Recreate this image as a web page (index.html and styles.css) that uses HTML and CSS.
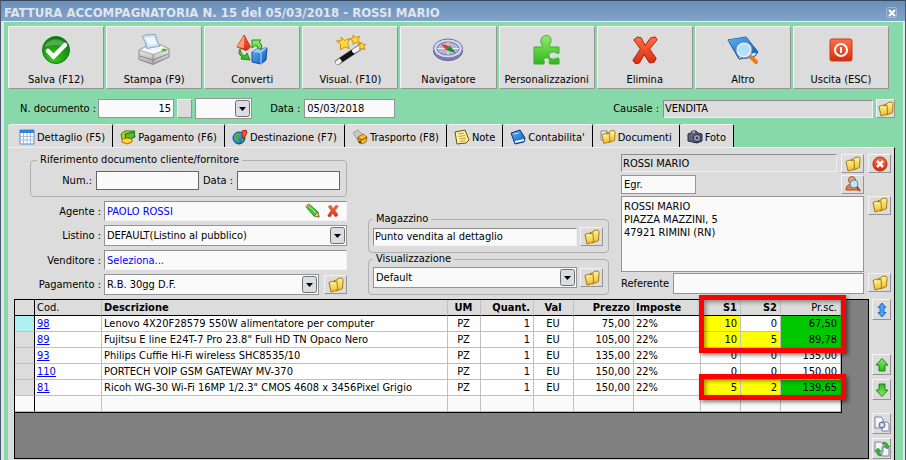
FILE: index.html
```html
<!DOCTYPE html>
<html lang="it">
<head>
    <meta charset="UTF-8">
    <meta name="viewport" content="width=device-width, initial-scale=1.0">
    <title>Fattura accompagnatoria</title>
    <link rel="stylesheet" href="styles.css">
</head>
<body>
    <svg class="defs" width="0" height="0" aria-hidden="true">
        <defs>
            <linearGradient id="gGold" x1="0" y1="0" x2="0" y2="1"><stop offset="0" stop-color="#fff6a0"/><stop offset="1" stop-color="#eebc20"/></linearGradient>
            <linearGradient id="gGreen" x1="0" y1="0" x2="0" y2="1"><stop offset="0" stop-color="#8fec6a"/><stop offset="1" stop-color="#2fb81e"/></linearGradient>
            <linearGradient id="gRed" x1="0" y1="0" x2="0" y2="1"><stop offset="0" stop-color="#ff7048"/><stop offset="1" stop-color="#d82c0c"/></linearGradient>
            <linearGradient id="gBlue" x1="0" y1="0" x2="1" y2="1"><stop offset="0" stop-color="#5ab4f4"/><stop offset="1" stop-color="#1058b8"/></linearGradient>
            <linearGradient id="gGrey" x1="0" y1="0" x2="0" y2="1"><stop offset="0" stop-color="#ffffff"/><stop offset="1" stop-color="#a8a8a8"/></linearGradient>
            <radialGradient id="gOk" cx=".4" cy=".8" r=".8"><stop offset="0" stop-color="#3cc81c"/><stop offset="1" stop-color="#0a7a10"/></radialGradient>
        </defs>
        <symbol id="folder" viewBox="0 0 16 16">
            <path d="M6 3.500l3-.5 1-1.500 4-.5 1 1.500-.5 9-6 2.500z" fill="url(#gGold)" stroke="#a87c10"/>
            <path d="M1 5.500l3.500-1.500 1 1 3.500-1L9.500 13l-6.500 2z" fill="url(#gGold)" stroke="#a87c10"/>
        </symbol>
        <symbol id="cross" viewBox="0 0 28 30">
            <path d="M2 4L6 1l4 1 4 8 6-8 5-1 2 3-8 10 7 10-2 4-5 1-6-9-5 9-4 1-3-4 8-12z" fill="url(#gRed)" stroke="#a81c08"/>
        </symbol>
        <symbol id="arrow-up" viewBox="0 0 16 16">
            <path d="M8 1.500l6 6.500h-3v6H5V8H2z" fill="url(#gGreen)" stroke="#188818"/>
        </symbol>
    </svg>

    <div class="window">
        <header class="titlebar">
            <h1>FATTURA ACCOMPAGNATORIA N. 15 del 05/03/2018 - ROSSI MARIO</h1>
            <button type="button" class="close" aria-label="Chiudi">
                <svg width="8" height="8" viewBox="0 0 8 8"><path d="M1 1l6 6M7 1L1 7" stroke="#fff" stroke-width="2"/></svg>
            </button>
        </header>

        <nav class="toolbar">
            <button type="button">
                <svg viewBox="0 0 32 32"><circle cx="16" cy="16" r="13.500" fill="url(#gOk)" stroke="#0c7c14"/><path d="M4.500 13a12 11 0 0 1 23 0q-12-4-23 0z" fill="#fff" opacity=".25"/><path d="M8 17l5.500 5.500L25 11" fill="none" stroke="#fff" stroke-width="4.500" stroke-linecap="round"/></svg>
                <span>Salva (F12)</span>
            </button>
            <button type="button">
                <svg viewBox="0 0 32 32"><path d="M1 16l8-4 14-1 8 4v8l-16 7.500-14-5z" fill="url(#gGrey)" stroke="#888"/><path d="M1 16l14 4.500 16-5.500-8-4-14 1z" fill="#f4f4f4" stroke="#a8a8a8"/><path d="M4 2.500l3.500-1.500 10-.5q.5 6 4.500 11.500L9 14.500q-1-7-5-12z" fill="#cfe4fa" stroke="#88a0c0"/><path d="M7 4l9-1 3 7-8 1z" fill="#f0f8ff"/><path d="M15 20.500v9M2 22l13 4 15-6" stroke="#888" fill="none"/><ellipse cx="26" cy="16" rx="2.500" ry="1.500" fill="#38c820"/></svg>
                <span>Stampa (F9)</span>
            </button>
            <button type="button">
                <svg viewBox="0 0 32 32"><path d="M8 1l6.500 12-4 3.500L1 13z" fill="url(#gRed)" stroke="#c03010"/><path d="M8 1v13L1 13z" fill="#ff9a78"/><path d="M16 18l5-3 10-1-1 12-5 4-9-2z" fill="url(#gBlue)" stroke="#20489c"/><path d="M16 18l9 1 6-5-10 1z" fill="#9ccafa"/><path d="M25 19v11" stroke="#b0d4ff"/><path d="M4 15q1 6 5 7l2-3 3 7-9-1 1-2q-5-4-2-8zM16 6h9l-2 2q4 2 2 8l-4-3q0-2-1-2l-4 3z" fill="url(#gGreen)" stroke="#189018"/></svg>
                <span>Converti</span>
            </button>
            <button type="button">
                <svg viewBox="0 0 32 32"><path d="M4 28L25 14" stroke="#777" stroke-width="6" stroke-linecap="round"/><path d="M7 26l12-8" stroke="#111" stroke-width="5"/><path d="M3.500 28.500l2-1.500M20 17l5-3" stroke="#f4f4f4" stroke-width="4" stroke-linecap="round"/><path d="M7 3l3.500 3.500 5-2-2 5 2 5-5-1.500-4 3V10L2.500 7l5-.5zM19 1l2.500 2.500 4-1-1.500 3.500 2 3.500-4-1-3 2V7l-3-2 3-1zM27 8l1.500 2.500 3-.5-1.500 2.500 1 3-3-1-2.500 1 .5-3-2-2 3-.5z" fill="#ffd83c" stroke="#c8900c"/></svg>
                <span>Visual. (F10)</span>
            </button>
            <button type="button">
                <svg viewBox="0 0 32 32"><ellipse cx="16" cy="17" rx="14.500" ry="9.500" fill="#8484b8" stroke="#5c5c94"/><ellipse cx="16" cy="14.500" rx="14.500" ry="9.500" fill="#d4d4f4" stroke="#7070a8"/><ellipse cx="16" cy="14.500" rx="11" ry="6.500" fill="#b4b8d4" stroke="#7474a0"/><path d="M16 8v13M5 14.500h22" stroke="#e8e8f8"/><path d="M9 10l9 2-4 4z" fill="#f03820"/><path d="M18 12l6 7-10-3z" fill="#109028"/></svg>
                <span>Navigatore</span>
            </button>
            <button type="button">
                <svg viewBox="0 0 32 32"><path d="M3 13h8c2-1-2-3-1-7 1-6 10-6 10 0 0 4-3 6-1 7h9v6c-1 2-4-2-7-1-4 1-4 6 0 7 4 1 6-3 7 0v5h-9c-2-1 1-5-2-6-3-1-5 1-4 3 1 2 0 3-1 3H3z" fill="url(#gGreen)" stroke="#3cae28"/></svg>
                <span>Personalizzazioni</span>
            </button>
            <button type="button">
                <svg viewBox="0 0 32 32"><use href="#cross" x="2" y="2" width="28" height="28"/></svg>
                <span>Elimina</span>
            </button>
            <button type="button">
                <svg viewBox="0 0 32 32"><path d="M1 6l18-3 12 15-4 5-15 2z" fill="url(#gBlue)" stroke="#104890"/><path d="M11 22l19-4-2 4-16 3z" fill="#f4f8ff" stroke="#3468a8"/><path d="M1 6l18-3 12 15-19 4z" fill="url(#gBlue)"/><path d="M23 22l6 6" stroke="#f07818" stroke-width="4" stroke-linecap="round"/><circle cx="17" cy="16" r="7" fill="#b0e0fc" stroke="#e4eef8" stroke-width="2"/><circle cx="17" cy="16" r="8" fill="none" stroke="#6890b8"/></svg>
                <span>Altro</span>
            </button>
            <button type="button">
                <svg viewBox="0 0 32 32"><rect x="5" y="5" width="22" height="22" rx="2" fill="url(#gRed)" stroke="#c43c20"/><circle cx="16" cy="16" r="6" fill="none" stroke="#fff" stroke-width="2"/><path d="M16 13v6" stroke="#fff" stroke-width="2"/></svg>
                <span>Uscita (ESC)</span>
            </button>
        </nav>

        <div class="docbar">
            <label for="numero">N. documento :</label>
            <input type="text" id="numero" class="numero" value="15">
            <button type="button" class="small-btn" aria-label="Numerazione"></button>
            <select class="serie" aria-label="Serie"><option></option></select>
            <label for="data" class="label-data">Data :</label>
            <input type="text" id="data" class="data" value="05/03/2018">
            <label for="causale" class="label-causale">Causale :</label>
            <input type="text" id="causale" class="sunken causale" value="VENDITA" readonly>
            <button type="button" class="icon-btn" aria-label="Apri causale"><svg><use href="#folder"/></svg></button>
        </div>

        <div class="tabs" role="tablist">
            <button type="button" role="tab" class="tab active" aria-selected="true">
                <svg viewBox="0 0 16 16"><path d="M1 1h14v14H1z" fill="#fff" stroke="#5888c8"/><path d="M1 1h14v3H1z" fill="#2c84e0"/><path d="M4.500 4v11M8 4v11M11.500 4v11M1 7.500h14M1 11h14" stroke="#a8bce0"/></svg>
                Dettaglio (F5)
            </button>
            <button type="button" role="tab" class="tab">
                <svg viewBox="0 0 16 16"><path d="M1 5l4-3 10 0-2 4-8 6-3-2z" fill="#b0d820" stroke="#487808"/><path d="M5 5l9-2 1 5-9 3z" fill="#58bc30" stroke="#186818"/><path d="M2 10l5-1 5 1v3l-5 2-5-2z" fill="#ffd840" stroke="#987008"/></svg>
                Pagamento (F6)
            </button>
            <button type="button" role="tab" class="tab">
                <svg viewBox="0 0 16 16"><circle cx="7" cy="9" r="6" fill="url(#gBlue)" stroke="#104080"/><path d="M3 5l4-1 2 3-3 2 1 5-4-4zM10 9l2 1-2 4z" fill="#40b830"/><path d="M10 2l4-1 1 3-4 6-1-5z" fill="#f05828" stroke="#a02c10"/></svg>
                Destinazione (F7)
            </button>
            <button type="button" role="tab" class="tab">
                <svg viewBox="0 0 16 16"><path d="M1 4l5-3 4 4-1 6-4-1z" fill="#c8c8cc" stroke="#a0a0a0"/><path d="M6 8l5-3 4 3-1 5-4 2-4-3z" fill="#ffbc28" stroke="#a86c08"/><path d="M6 9l4 2 5-3" fill="none" stroke="#704808"/><circle cx="8" cy="13" r="1.500" fill="#444"/></svg>
                Trasporto (F8)
            </button>
            <button type="button" role="tab" class="tab">
                <svg viewBox="0 0 16 16"><path d="M1 3l10-2 4 10-3 3-9 1z" fill="#fff2a0" stroke="#685008"/><path d="M4 5l6-1M4.500 7.500l6.500-1M5 10l7-1M6 12.500l5-1" stroke="#b89848"/></svg>
                Note
            </button>
            <button type="button" role="tab" class="tab">
                <svg viewBox="0 0 16 16"><path d="M1 4l9-3 5 8-1 4-9 2z" fill="url(#gBlue)" stroke="#083880"/><path d="M5 12l9-2v2l-9 2z" fill="#f0f8ff"/><path d="M4 5l5-1" stroke="#c8e4ff"/></svg>
                Contabilita'
            </button>
            <button type="button" role="tab" class="tab">
                <svg viewBox="0 0 16 16"><path d="M1 2h6v9H1z" fill="#eef" stroke="#8088a0"/><use href="#folder" x="1" y="0" width="15" height="16"/></svg>
                Documenti
            </button>
            <button type="button" role="tab" class="tab">
                <svg viewBox="0 0 16 16"><path d="M1 5l3-1 1-2h4l2 2 4 1v7l-5 2-9-2z" fill="#606078" stroke="#282838"/><circle cx="10" cy="9" r="3.500" fill="#a8b8d8" stroke="#202030"/><circle cx="10" cy="9" r="1.500" fill="#283860"/><path d="M5 3h3" stroke="#e0e0f0"/></svg>
                Foto
            </button>
        </div>

        <main class="panel">
            <div class="form">
                <div class="col-left">
                    <fieldset class="riferimento">
                        <legend>Riferimento documento cliente/fornitore</legend>
                        <label for="rif-num">Num.:</label>
                        <input type="text" id="rif-num">
                        <label for="rif-data">Data :</label>
                        <input type="text" id="rif-data">
                    </fieldset>
                    <div class="row">
                        <label for="agente">Agente :</label>
                        <div class="field-box">
                            <input type="text" id="agente" value="PAOLO ROSSI">
                            <button type="button" class="plain" aria-label="Modifica agente"><svg viewBox="0 0 16 16"><path d="M1 4l3-3 9 8 1 5-5-1z" fill="#48c438" stroke="#388828"/><path d="M3 2.500l9 8.500" stroke="#a8f088"/><path d="M13 9l1 5-5-1z" fill="#f0c888" stroke="#987048"/><path d="M1 4l3-3" stroke="#f08080" stroke-width="2"/></svg></button>
                            <button type="button" class="plain" aria-label="Rimuovi agente"><svg viewBox="0 0 16 16"><use href="#cross" x="2" y="2" width="12" height="12"/></svg></button>
                        </div>
                    </div>
                    <div class="row">
                        <label for="listino">Listino :</label>
                        <select id="listino"><option>DEFAULT(Listino al pubblico)</option></select>
                    </div>
                    <div class="row">
                        <label for="venditore">Venditore :</label>
                        <div class="field-box"><input type="text" id="venditore" value="Seleziona..."></div>
                    </div>
                    <div class="row">
                        <label for="pagamento">Pagamento :</label>
                        <select id="pagamento"><option>R.B. 30gg D.F.</option></select>
                        <button type="button" class="icon-btn" aria-label="Apri pagamento"><svg><use href="#folder"/></svg></button>
                    </div>
                </div>

                <div class="col-mid">
                    <fieldset>
                        <legend><label for="magazzino">Magazzino</label></legend>
                        <input type="text" id="magazzino" class="sunken white" value="Punto vendita al dettaglio" readonly>
                        <button type="button" class="icon-btn" aria-label="Apri magazzino"><svg><use href="#folder"/></svg></button>
                    </fieldset>
                    <fieldset>
                        <legend><label for="visualizzazione">Visualizzazione</label></legend>
                        <select id="visualizzazione"><option>Default</option></select>
                        <button type="button" class="icon-btn" aria-label="Apri visualizzazione"><svg><use href="#folder"/></svg></button>
                    </fieldset>
                </div>

                <div class="col-right">
                    <input type="text" class="sunken" value="ROSSI MARIO" aria-label="Cliente" readonly>
                    <button type="button" class="icon-btn" aria-label="Apri cliente"><svg><use href="#folder"/></svg></button>
                    <button type="button" class="icon-btn" aria-label="Rimuovi cliente"><svg viewBox="0 0 16 16"><circle cx="8" cy="8" r="7" fill="url(#gRed)" stroke="#b02010"/><path d="M5 5l6 6M11 5l-6 6" stroke="#fff" stroke-width="2.500"/></svg></button>
                    <input type="text" class="titolo" value="Egr." aria-label="Titolo">
                    <button type="button" class="icon-btn" aria-label="Cerca cliente"><svg viewBox="0 0 16 16"><circle cx="7" cy="4" r="3.500" fill="#f0a070" stroke="#b05828"/><path d="M1 14q0-6 6-6t7 6z" fill="#f07840" stroke="#b04818"/><circle cx="9" cy="8" r="4" fill="#c0e8fc" stroke="#5888b0"/><path d="M12 11l3 4" stroke="#905020" stroke-width="2"/></svg></button>
                    <textarea class="indirizzo" aria-label="Indirizzo">ROSSI MARIO
PIAZZA MAZZINI, 5
47921 RIMINI (RN)</textarea>
                    <button type="button" class="icon-btn" aria-label="Apri indirizzo"><svg><use href="#folder"/></svg></button>
                    <div class="referente">
                        <label for="referente">Referente</label>
                        <input type="text" id="referente">
                    </div>
                    <button type="button" class="icon-btn" aria-label="Apri referente"><svg><use href="#folder"/></svg></button>
                </div>
            </div>

            <div class="grid-area">
                <div class="grid">
                    <table>
                        <colgroup>
                            <col class="c-sel"><col class="c-cod"><col><col class="c-um"><col class="c-quant"><col class="c-val"><col class="c-prezzo"><col class="c-imposte"><col class="c-sconto"><col class="c-sconto"><col class="c-prsc">
                        </colgroup>
                        <thead>
                            <tr><th></th><th class="light">Cod.</th><th>Descrizione</th><th class="mid">UM</th><th class="num">Quant.</th><th class="mid">Val</th><th class="num">Prezzo</th><th>Imposte</th><th class="num">S1</th><th class="num">S2</th><th class="num light">Pr.sc.</th></tr>
                        </thead>
                        <tbody>
                            <tr class="current"><td></td><td><a href="#">98</a></td><td>Lenovo 4X20F28579 550W alimentatore per computer</td><td class="mid">PZ</td><td class="num">1</td><td class="mid">EU</td><td class="num">75,00</td><td>22%</td><td class="num yellow">10</td><td class="num">0</td><td class="num green">67,50</td></tr>
                            <tr><td></td><td><a href="#">89</a></td><td>Fujitsu E line E24T-7 Pro 23.8" Full HD TN Opaco Nero</td><td class="mid">PZ</td><td class="num">1</td><td class="mid">EU</td><td class="num">105,00</td><td>22%</td><td class="num yellow">10</td><td class="num yellow">5</td><td class="num green">89,78</td></tr>
                            <tr><td></td><td><a href="#">93</a></td><td>Philips Cuffie Hi-Fi wireless SHC8535/10</td><td class="mid">PZ</td><td class="num">1</td><td class="mid">EU</td><td class="num">135,00</td><td>22%</td><td class="num">0</td><td class="num">0</td><td class="num">135,00</td></tr>
                            <tr><td></td><td><a href="#">110</a></td><td>PORTECH VOIP GSM GATEWAY MV-370</td><td class="mid">PZ</td><td class="num">1</td><td class="mid">EU</td><td class="num">150,00</td><td>22%</td><td class="num">0</td><td class="num">0</td><td class="num">150,00</td></tr>
                            <tr><td></td><td><a href="#">81</a></td><td>Ricoh WG-30 Wi-Fi 16MP 1/2.3" CMOS 4608 x 3456Pixel Grigio</td><td class="mid">PZ</td><td class="num">1</td><td class="mid">EU</td><td class="num">150,00</td><td>22%</td><td class="num yellow">5</td><td class="num yellow">2</td><td class="num green">139,65</td></tr>
                            <tr class="empty"><td></td><td></td><td></td><td></td><td></td><td></td><td></td><td></td><td></td><td></td><td></td></tr>
                        </tbody>
                    </table>
                    <div class="mark mark-top"></div>
                    <div class="mark mark-bottom"></div>
                </div>
                <div class="side">
                    <button type="button" class="icon-btn" aria-label="Altezza righe"><svg viewBox="0 0 16 16"><path d="M8 1l4 4.500h-2v5h2L8 15l-4-4.500h2v-5H4z" fill="#48a0f0" stroke="#2070c8"/></svg></button>
                    <button type="button" class="icon-btn up" aria-label="Sposta su"><svg viewBox="0 0 16 16"><use href="#arrow-up"/></svg></button>
                    <button type="button" class="icon-btn" aria-label="Sposta giù"><svg viewBox="0 0 16 16"><use href="#arrow-up" transform="rotate(180 8 8)"/></svg></button>
                    <button type="button" class="icon-btn copy" aria-label="Opzioni documento"><svg viewBox="0 0 16 16"><path d="M1 1h6l2 2v9H1zM8 6h5l2 2v7H8z" fill="#f4f4ff" stroke="#7c84a8"/><circle cx="8" cy="9" r="3" fill="#c0c4dc" stroke="#606890"/><circle cx="8" cy="9" r="1" fill="#fff"/></svg></button>
                    <button type="button" class="icon-btn" aria-label="Converti documento"><svg viewBox="0 0 16 16"><path d="M1 1h6l2 2v8H1zM8 6h5l2 2v7H8z" fill="#f4f4ff" stroke="#7c84a8"/><path d="M9 1q5 0 5 4h2l-3 3-3-3h2q0-2-3-2zM7 15q-5 0-4-5H1l3-3 3 3H5q0 3 2 3z" fill="#38b828" stroke="#107810" stroke-width=".5"/></svg></button>
                </div>
            </div>
        </main>
    </div>
</body>
</html>
```
FILE: styles.css
```css
* {
    box-sizing: border-box;
}

body,
input,
select,
textarea,
button {
    font-family: Tahoma, "DejaVu Sans Condensed", "DejaVu Sans", sans-serif;
    font-size: 11px;
    color: #000;
}

body {
    margin: 0;
    background-color: #87d9a9;
}

.defs {
    position: absolute;
}

.window {
    display: flex;
    flex-direction: column;
    min-height: 100vh;
    border-left: 1px solid #4a5568;
    border-right: 1px solid #4a5568;
    box-shadow: inset 3px 0 #e6e6ea, inset -2px 0 #e6e6ea;
}

/* title bar */
.titlebar {
    display: flex;
    align-items: center;
    justify-content: space-between;
    height: 22px;
    padding: 3px 8px 0 3px;
    background: linear-gradient(#6a90b8, #84a2ca);
    border-top: 1px solid #34465c;
    border-bottom: 1px solid #e8eef4;
}

.titlebar h1 {
    margin: 0;
    font-size: 13px;
    line-height: 16px;
    color: #dfe6ee;
    white-space: nowrap;
}

.close {
    display: flex;
    align-items: center;
    justify-content: center;
    width: 11px;
    height: 11px;
    padding: 0;
    border: 1px solid #a0b8d4;
    border-radius: 2px;
    background: none;
}

/* toolbar */
.toolbar {
    display: flex;
    gap: 2px;
    padding: 4px 16px 0 7px;
}

.toolbar button {
    flex: 1;
    display: flex;
    flex-direction: column;
    align-items: center;
    gap: 7px;
    min-width: 0;
    height: 63px;
    padding: 7px 0 0;
    background-color: #dcdcdc;
    border: 1px solid;
    border-color: #f4f4f4 #949494 #949494 #f4f4f4;
    line-height: 14px;
    white-space: nowrap;
}

.toolbar svg {
    width: 32px;
    height: 32px;
}

/* document row */
.docbar {
    display: flex;
    align-items: center;
    padding: 9px 10px 5px 19px;
}

input,
select,
textarea {
    min-width: 0;
    margin: 0;
    padding: 0 2px;
    background-color: #fafafa;
    border: 1px solid #949494;
    border-radius: 0;
}

input {
    height: 19px;
}

select {
    height: 21px;
    appearance: none;
    background-image: url("data:image/svg+xml,%3Csvg xmlns='http://www.w3.org/2000/svg' width='15' height='17'%3E%3Crect x='.5' y='.5' width='14' height='16' rx='2' fill='%23dcdce4' stroke='%23707070'/%3E%3Cpath d='M4 7h7l-3.500 4z'/%3E%3C/svg%3E");
    background-repeat: no-repeat;
    background-position: right 1px center;
}

.sunken {
    height: 18px;
    padding: 0 1px;
    background-color: #dcdcdc;
    border-color: #8c8c8c #f0f0f4 #f0f0f4 #8c8c8c;
}

.sunken.white {
    background-color: #fafafa;
}

.numero {
    width: 76px;
    margin-left: 2px;
    text-align: right;
}

.small-btn {
    width: 15px;
    height: 19px;
    margin: 0 3px;
    padding: 0;
    background-color: #dcdcdc;
    border: 1px solid;
    border-color: #f4f4f4 #949494 #949494 #f4f4f4;
}

.serie {
    width: 57px;
}

.label-data {
    margin-left: 18px;
}

.data {
    width: 91px;
    margin-left: 4px;
}

.label-causale {
    margin-left: auto;
}

.causale {
    flex: 0 1 210px;
    margin: 0 3px 0 4px;
}

.icon-btn {
    display: flex;
    align-items: center;
    justify-content: center;
    width: 23px;
    height: 19px;
    padding: 0;
    background-color: #dcdcdc;
    border: 1px solid;
    border-color: #f4f4f4 #949494 #949494 #f4f4f4;
}

.docbar .icon-btn {
    width: 19px;
}

.icon-btn svg {
    flex: none;
    width: 16px;
    height: 16px;
}

/* tabs */
.tabs {
    display: flex;
    padding-left: 7px;
}

.tab {
    display: flex;
    align-items: center;
    gap: 2px;
    height: 23px;
    padding: 2px 7px 0;
    background-color: #dcdcdc;
    border: none;
    border-top: 1px solid #f0f0f0;
    border-right: 1px solid #000;
    border-radius: 3px 2px 0 0;
    white-space: nowrap;
}

.tab.active {
    padding-left: 11px;
}

.tab svg {
    width: 16px;
    height: 16px;
}

/* tab panel */
.panel {
    flex: 1;
    display: flex;
    flex-direction: column;
    gap: 4px;
    margin: 0 10px 0 7px;
    padding: 6px 3px 1px 6px;
    background-color: #dcdcdc;
    border-top: 1px solid #f0f0f4;
    border-right: 1px solid #000;
}

.form {
    display: grid;
    grid-template-columns: minmax(0, 333fr) minmax(0, 250fr) minmax(0, 270fr);
    column-gap: 12px;
}

fieldset {
    min-width: 0;
    margin: 0;
    border: 1px solid #b0b0b0;
    border-radius: 4px;
    display: flex;
    align-items: center;
}

legend {
    padding: 0 3px;
    line-height: 12px;
}

.col-left {
    display: flex;
    flex-direction: column;
    gap: 4px;
}

.riferimento {
    margin-left: 16px;
    padding: 5px 6px 6px;
    gap: 4px;
}

.riferimento input {
    flex: 1;
    border-color: #646464;
}

.riferimento label:first-of-type {
    width: 55px;
    text-align: right;
}

.row {
    display: flex;
    align-items: center;
}

.row > label {
    width: 87px;
    margin-right: 3px;
    text-align: right;
    white-space: nowrap;
}

.row > select {
    flex: 1;
}

.row .icon-btn {
    margin-left: 5px;
}

.field-box {
    flex: 1;
    display: flex;
    align-items: center;
    gap: 4px;
    height: 20px;
    padding-right: 5px;
    background-color: #fafafa;
    border: 1px solid;
    border-color: #8c8c8c #f4f4f4 #f4f4f4 #8c8c8c;
}

.field-box input {
    flex: 1;
    height: 18px;
    background: none;
    border: none;
    color: #0000ff;
}

.plain {
    display: flex;
    padding: 0;
    background: none;
    border: none;
}

.plain svg {
    width: 16px;
    height: 16px;
}

.col-mid {
    display: flex;
    flex-direction: column;
    justify-content: flex-end;
    padding-left: 9px;
}

.col-mid fieldset {
    gap: 3px;
    padding: 2px 5px 6px 4px;
}

.col-mid fieldset > input,
.col-mid fieldset > select {
    flex: 1;
}

.col-right {
    display: grid;
    grid-template-columns: minmax(0, 1fr) 23px 23px;
    column-gap: 4px;
    row-gap: 1px;
    align-items: start;
}

.titolo {
    grid-column: 1;
    width: 75px;
}

.indirizzo {
    grid-column: 1 / 3;
    height: 76px;
    padding: 3px 2px;
    line-height: 13px;
    resize: none;
}

.referente {
    grid-column: 1 / 3;
    display: flex;
    align-items: center;
    gap: 4px;
}

.referente input {
    flex: 1;
    height: 21px;
}

/* rows grid */
.grid-area {
    flex: 1;
    display: flex;
    gap: 3px;
}

.grid {
    position: relative;
    flex: 1;
    padding-right: 26px;
    background-color: #808080;
    border: 1px solid #000;
}

table {
    width: 100%;
    table-layout: fixed;
    border-collapse: separate;
    border-spacing: 0;
    border-right: 1px solid #000;
    border-bottom: 1px solid #000;
}

.c-sel { width: 20px; }
.c-cod { width: 67px; }
.c-um { width: 33px; }
.c-quant { width: 53px; }
.c-val { width: 40px; }
.c-prezzo { width: 60px; }
.c-imposte { width: 67px; }
.c-sconto { width: 40px; }
.c-prsc { width: 60px; }

th,
td {
    height: 16px;
    padding: 0 3px 0 2px;
    line-height: 15px;
    text-align: left;
    white-space: nowrap;
    background-color: #fff;
    border-right: 1px solid #c0c0c0;
    border-bottom: 1px solid #c0c0c0;
}

th {
    background-color: #dcdcdc;
    border-bottom-color: #000;
}

.light {
    font-weight: normal;
}

th:first-child,
td:first-child {
    background-color: #dcdcdc;
    border-right-color: #000;
}

.current td:first-child {
    background-color: #b0f0f0;
}

.empty td {
    background-color: #fafafa;
}

.num {
    text-align: right;
}

.mid {
    text-align: center;
}

.yellow {
    background-color: #ffff00;
}

.green {
    background-color: #00c800;
    border-color: #00c800;
}

td a {
    color: #0000ff;
}

/* red frames over the discount columns */
.mark {
    position: absolute;
    right: 22px;
    width: 147px;
    border: 5px solid #ff0000;
    box-shadow: 2px 2px 4px rgba(0, 0, 0, 0.5), inset 2px 2px 4px rgba(0, 0, 0, 0.4);
}

.mark-top {
    top: -5px;
    height: 58px;
}

.mark-bottom {
    top: 74px;
    height: 26px;
}

.side {
    display: flex;
    flex-direction: column;
    gap: 4px;
}

.side .icon-btn {
    width: 19px;
    height: 21px;
}

.side .up {
    margin-top: 30px;
}

.side .copy {
    margin-top: 9px;
}
```
